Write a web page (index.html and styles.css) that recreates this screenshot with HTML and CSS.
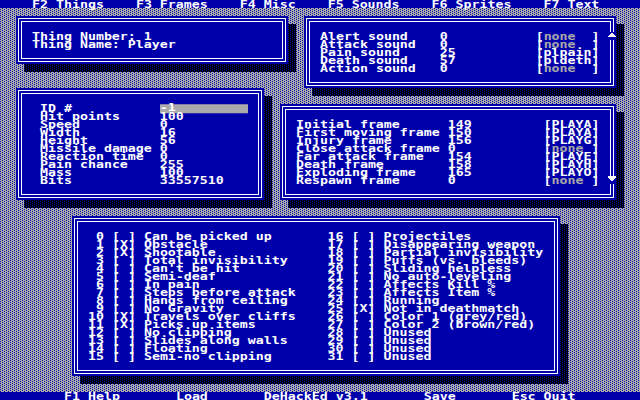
FILE: index.html
```html
<!DOCTYPE html>
<html>
<head>
<meta charset="utf-8">
<title>DeHackEd v3.1</title>
<link rel="stylesheet" href="styles.css">
</head>
<body>
<div class="screen">
  <header class="bar bar-top">
    <div class="txt bar-items"><span>F2 Things</span><span>F3 Frames</span><span>F4 Misc</span><span>F5 Sounds</span><span>F6 Sprites</span><span>F7 Text</span></div>
  </header>

  <div class="shadow s-a"></div>
  <div class="shadow s-b"></div>
  <div class="shadow s-c"></div>
  <div class="shadow s-d"></div>
  <div class="shadow s-e"></div>

  <section class="win w-a">
    <div class="frame"><div class="frame-in">
      <div class="txt"><div>Thing Number: 1</div><div>Thing Name: Player</div></div>
    </div></div>
  </section>

  <section class="win w-b">
    <div class="frame"><div class="frame-in">
      <div class="txt snd">
        <div class="row"><span>Alert sound</span><span>0</span><span>[<span class="dim">none  </span>]</span></div>
        <div class="row"><span>Attack sound</span><span>0</span><span>[<span class="dim">none  </span>]</span></div>
        <div class="row"><span>Pain sound</span><span>25</span><span>[plpain]</span></div>
        <div class="row"><span>Death sound</span><span>57</span><span>[pldeth]</span></div>
        <div class="row"><span>Action sound</span><span>0</span><span>[<span class="dim">none  </span>]</span></div>
      </div>
    </div></div>
    <div class="arrow arrow-b"><svg width="8" height="8" viewBox="0 0 8 8"><path d="M3 1h2v1h1v1h1v1h1v1H0V4h1V3h1V2h1z" fill="#fff"/></svg></div>
  </section>

  <section class="win w-c">
    <div class="frame"><div class="frame-in ids-in">
      <div class="txt ids">
        <div class="row"><span>ID #</span><span class="field">-1</span></div>
        <div class="row"><span>Hit points</span><span>100</span></div>
        <div class="row"><span>Speed</span><span>0</span></div>
        <div class="row"><span>Width</span><span>16</span></div>
        <div class="row"><span>Height</span><span>56</span></div>
        <div class="row"><span>Missile damage</span><span>0</span></div>
        <div class="row"><span>Reaction time</span><span>0</span></div>
        <div class="row"><span>Pain chance</span><span>255</span></div>
        <div class="row"><span>Mass</span><span>100</span></div>
        <div class="row"><span>Bits</span><span>33557510</span></div>
      </div>
    </div></div>
  </section>

  <section class="win w-d">
    <div class="frame"><div class="frame-in">
      <div class="txt frm">
        <div class="row"><span>Initial frame</span><span>149</span><span>[PLAYA]</span></div>
        <div class="row"><span>First moving frame</span><span>150</span><span>[PLAYA]</span></div>
        <div class="row"><span>Injury frame</span><span>156</span><span>[PLAYG]</span></div>
        <div class="row"><span>Close attack frame</span><span>0</span><span>[<span class="dim">none </span>]</span></div>
        <div class="row"><span>Far attack frame</span><span>154</span><span>[PLAYE]</span></div>
        <div class="row"><span>Death frame</span><span>158</span><span>[PLAYH]</span></div>
        <div class="row"><span>Exploding frame</span><span>165</span><span>[PLAYO]</span></div>
        <div class="row"><span>Respawn frame</span><span>0</span><span>[<span class="dim">none </span>]</span></div>
      </div>
    </div></div>
    <div class="arrow arrow-d"><svg width="8" height="8" viewBox="0 0 8 8"><path d="M0 0h8v2H7v1H6v1H5v1H3V4H2V3H1V2H0z" fill="#fff"/></svg></div>
  </section>

  <section class="win w-e">
    <div class="frame"><div class="frame-in">
      <div class="txt bits">
        <div> 0 [ ] Can be picked up</div>
        <div> 1 [X] Obstacle</div>
        <div> 2 [X] Shootable</div>
        <div> 3 [ ] Total invisibility</div>
        <div> 4 [ ] Can't be hit</div>
        <div> 5 [ ] Semi-deaf</div>
        <div> 6 [ ] In pain</div>
        <div> 7 [ ] Steps before attack</div>
        <div> 8 [ ] Hangs from ceiling</div>
        <div> 9 [ ] No Gravity</div>
        <div>10 [X] Travels over cliffs</div>
        <div>11 [X] Picks up items</div>
        <div>12 [ ] No clipping</div>
        <div>13 [ ] Slides along walls</div>
        <div>14 [ ] Floating</div>
        <div>15 [ ] Semi-no clipping</div>
        <div>16 [ ] Projectiles</div>
        <div>17 [ ] Disappearing weapon</div>
        <div>18 [ ] Partial invisibility</div>
        <div>19 [ ] Puffs (vs. bleeds)</div>
        <div>20 [ ] Sliding helpless</div>
        <div>21 [ ] No auto-leveling</div>
        <div>22 [ ] Affects Kill %</div>
        <div>23 [ ] Affects Item %</div>
        <div>24 [ ] Running</div>
        <div>25 [X] Not in deathmatch</div>
        <div>26 [ ] Color 1 (grey/red)</div>
        <div>27 [ ] Color 2 (brown/red)</div>
        <div>28 [ ] Unused</div>
        <div>29 [ ] Unused</div>
        <div>30 [ ] Unused</div>
        <div>31 [ ] Unused</div>
      </div>
    </div></div>
  </section>

  <footer class="bar bar-bottom">
    <div class="txt bar-items"><span>F1 Help</span><span>Load</span><span>DeHackEd v3.1</span><span>Save</span><span>Esc Quit</span></div>
  </footer>
</div>
</body>
</html>
```
FILE: styles.css
```css
* { box-sizing: border-box; margin: 0; padding: 0; }

html, body {
  width: 640px;
  height: 400px;
  overflow: hidden;
  background: #000;
}

.screen {
  width: 640px;
  height: 400px;
  display: grid;
  grid-template-columns: repeat(80, 8px);
  grid-template-rows: repeat(50, 8px);
  color: #fff;
  background-color: #aaaaaa;
  background-image:
    conic-gradient(from 270deg at 1px 1px, #0000aa 90deg, transparent 0),
    conic-gradient(from 270deg at 1px 1px, #0000aa 90deg, transparent 0);
  background-size: 4px 2px;
  background-position: 2px 0, 0 1px;
}

/* 8x8 text cells: glyphs drawn 8px wide, squeezed vertically */
.txt {
  font-family: "DejaVu Sans Mono", monospace;
  font-weight: bold;
  font-size: 13.288px;
  line-height: 10.667px;
  transform: translateY(1px) scaleY(0.75);
  transform-origin: 0 0;
}
.txt * { white-space: pre; }

.bar { background: #0000aa; grid-column: 1 / -1; }
.bar-top { grid-row: 1; }
.bar-bottom { grid-row: 50; }
.bar-items { display: flex; height: 10.667px; }
.bar-top .bar-items { padding-left: 32px; gap: 32px; }
.bar-bottom .bar-items { padding-left: 64px; gap: 56px; }

.shadow {
  background-color: #000;
  background-image:
    conic-gradient(from 270deg at 1px 1px, #0000aa 90deg, transparent 0),
    conic-gradient(from 270deg at 1px 1px, #0000aa 90deg, transparent 0);
  background-size: 4px 2px;
  background-position: 2px 0, 0 1px;
}

.win {
  background: #0000aa;
  padding: 2px;
  display: flex;
  position: relative;
}
.frame {
  flex: 1;
  display: flex;
  border: 1px solid #fff;
  padding: 2px;
}
.frame-in {
  flex: 1;
  border: 1px solid #fff;
  padding: 10px 0 0 10px;
}
.ids-in { padding-left: 18px; }

.w-a { grid-column: 3 / 37; grid-row: 3 / 9; }
.s-a { grid-column: 4 / 38; grid-row: 4 / 10; }
.w-b { grid-column: 39 / 78; grid-row: 3 / 12; }
.s-b { grid-column: 40 / 79; grid-row: 4 / 13; }
.w-c { grid-column: 3 / 34; grid-row: 12 / 26; }
.s-c { grid-column: 4 / 35; grid-row: 13 / 27; }
.w-d { grid-column: 36 / 78; grid-row: 14 / 26; }
.s-d { grid-column: 37 / 79; grid-row: 15 / 27; }
.w-e { grid-column: 10 / 71; grid-row: 28 / 48; }
.s-e { grid-column: 11 / 72; grid-row: 29 / 49; }

.row { display: grid; height: 10.667px; }
.snd .row { grid-template-columns: 15ch 12ch auto; }
.frm .row { grid-template-columns: 19ch 12ch auto; }
.ids .row { grid-template-columns: 15ch 11ch; }
.field { background: #aaaaaa; margin-top: -1.333px; }
.dim { color: #aaaaaa; }

.bits {
  display: grid;
  grid-auto-flow: column;
  grid-template-rows: repeat(16, 10.667px);
  grid-template-columns: 30ch auto;
}

.arrow {
  position: absolute;
  width: 8px;
  height: 8px;
  background: #0000aa;
}
.arrow svg { display: block; }
.arrow-b { left: 304px; top: 16px; }
.arrow-d { left: 328px; top: 72px; }
```
